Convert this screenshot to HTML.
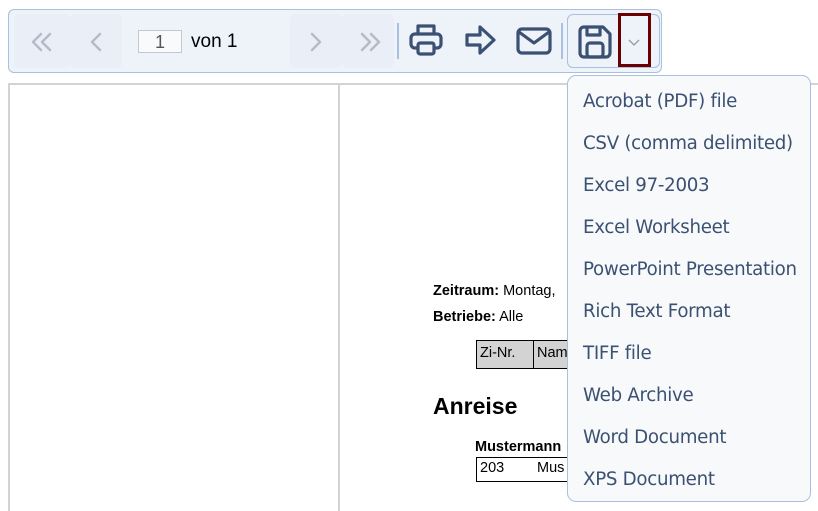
<!DOCTYPE html>
<html><head><meta charset="utf-8"><style>
body{margin:0;width:818px;height:511px;overflow:hidden;background:#fff;font-family:"Liberation Sans",sans-serif;position:relative}
.a{position:absolute}
.tb{left:8px;top:9px;width:654px;height:64px;background:#eef2f9;border:1px solid #a9c0e0;border-radius:6px;box-sizing:border-box}
.ic{position:absolute}
.dd{left:567px;top:75px;width:244px;height:427px;background:#f8f9fa;border:1.5px solid #a9c0e0;border-radius:9px;box-sizing:border-box}
.dd div{position:absolute;left:15px;font-size:18.5px;color:#3b5173;font-family:"DejaVu Sans","Liberation Sans",sans-serif;letter-spacing:-0.3px;transform:scaleX(0.985);transform-origin:left;white-space:nowrap}
.r{font-size:14.5px;color:#000;font-family:"Liberation Sans",sans-serif}
</style></head><body>
<div class="a tb"></div>
<div class="a" style="left:14px;top:14px;width:56px;height:54px;background:#eaeff7;border-radius:5px"></div>
<div class="a" style="left:70px;top:14px;width:52px;height:54px;background:#eaeff7;border-radius:5px"></div>
<div class="a" style="left:290px;top:14px;width:52px;height:54px;background:#eaeff7;border-radius:5px"></div>
<div class="a" style="left:342px;top:14px;width:52px;height:54px;background:#eaeff7;border-radius:5px"></div>
<svg class="ic" style="left:28px;top:31px" width="28" height="22" viewBox="0 0 28 22" fill="none" stroke="#b4bcc8" stroke-width="2.5" stroke-linecap="round" stroke-linejoin="round"><path d="M13 3 5 11l8 8M22 3l-8 8 8 8"/></svg>
<svg class="ic" style="left:88px;top:31px" width="16" height="22" viewBox="0 0 16 22" fill="none" stroke="#b4bcc8" stroke-width="2.5" stroke-linecap="round" stroke-linejoin="round"><path d="M12 3 4 11l8 8"/></svg>
<div class="a" style="left:138px;top:30px;width:44px;height:23px;border:1px solid #c4c8cc;background:#f9fafb;box-sizing:border-box;font-size:18px;color:#555;text-align:center;line-height:22px">1</div>
<div class="a" style="left:191px;top:31px;font-size:19px;color:#000">von&nbsp;1</div>
<svg class="ic" style="left:308px;top:31px" width="16" height="22" viewBox="0 0 16 22" fill="none" stroke="#b4bcc8" stroke-width="2.5" stroke-linecap="round" stroke-linejoin="round"><path d="M4 3l8 8-8 8"/></svg>
<svg class="ic" style="left:356px;top:31px" width="28" height="22" viewBox="0 0 28 22" fill="none" stroke="#b4bcc8" stroke-width="2.5" stroke-linecap="round" stroke-linejoin="round"><path d="M6 3l8 8-8 8M15 3l8 8-8 8"/></svg>
<div class="a" style="left:397px;top:23px;width:2px;height:36px;background:#a9c0e0"></div>
<svg class="ic" style="left:408px;top:22px" width="36" height="36" viewBox="0 0 36 36" fill="none" stroke="#3b5173" stroke-width="3.2" stroke-linejoin="round"><path d="M10 12V4h16v8"/><rect x="3" y="12" width="30" height="14" rx="4"/><rect x="10" y="21" width="16" height="11" rx="2" fill="#eef2f9"/></svg>
<svg class="ic" style="left:464px;top:24px" width="34" height="32" viewBox="0 0 34 32" fill="none" stroke="#3b5173" stroke-width="3.2" stroke-linejoin="round"><path d="M3 11h13V3l14 13-14 13v-8H3z"/></svg>
<svg class="ic" style="left:515px;top:26px" width="38" height="30" viewBox="0 0 38 30" fill="none" stroke="#3b5173" stroke-width="3.2" stroke-linejoin="round"><rect x="3" y="3" width="32" height="24" rx="4"/><path d="M4 6l15 11 15-11"/></svg>
<div class="a" style="left:561px;top:23px;width:2px;height:36px;background:#a9c0e0"></div>
<div class="a" style="left:567px;top:14px;width:93px;height:54px;border:1px solid #a9c0e0;border-radius:6px;box-sizing:border-box"></div>
<svg class="ic" style="left:577px;top:24px" width="36" height="36" viewBox="0 0 36 36" fill="none" stroke="#3b5173" stroke-width="3.2" stroke-linejoin="round"><path d="M3 7a4 4 0 0 1 4-4h19l7 7v19a4 4 0 0 1-4 4H7a4 4 0 0 1-4-4z"/><path d="M10 3v8h13V3"/><rect x="10" y="19" width="16" height="14" rx="3"/></svg>
<div class="a" style="left:618px;top:13px;width:33px;height:54px;border:3px solid #6b0000;box-sizing:border-box"></div>
<svg class="ic" style="left:627px;top:37px" width="14" height="10" viewBox="0 0 14 10" fill="none" stroke="#999" stroke-width="1.3"><path d="M2 3l5 5 5-5"/></svg>
<div class="a" style="left:8px;top:83px;width:810px;height:2px;background:#d3d3d3"></div>
<div class="a" style="left:8px;top:83px;width:2px;height:428px;background:#d3d3d3"></div>
<div class="a" style="left:338px;top:85px;width:2px;height:426px;background:#d3d3d3"></div>
<div class="a r" style="left:433px;top:283px"><b>Zeitraum:</b> Montag,</div>
<div class="a r" style="left:433px;top:309px"><b>Betriebe:</b> Alle</div>
<div class="a" style="left:476px;top:340px;width:100px;height:29px;background:#d3d3d3;border:1px solid #000;box-sizing:border-box"></div>
<div class="a" style="left:533px;top:340px;width:1px;height:29px;background:#000"></div>
<div class="a r" style="left:480px;top:345px">Zi-Nr.</div>
<div class="a r" style="left:537px;top:345px">Nam</div>
<div class="a" style="left:433px;top:393px;font-size:23px;font-weight:bold">Anreise</div>
<div class="a r" style="left:475px;top:439px;font-weight:bold">Mustermann</div>
<div class="a" style="left:476px;top:457px;width:100px;height:25px;border:1px solid #000;box-sizing:border-box"></div>
<div class="a r" style="left:480px;top:460px">203</div>
<div class="a r" style="left:537px;top:460px">Mus</div>
<div class="a dd">
<div style="top:15px">Acrobat (PDF) file</div>
<div style="top:57px">CSV (comma delimited)</div>
<div style="top:99px">Excel 97-2003</div>
<div style="top:141px">Excel Worksheet</div>
<div style="top:183px">PowerPoint Presentation</div>
<div style="top:225px">Rich Text Format</div>
<div style="top:267px">TIFF file</div>
<div style="top:309px">Web Archive</div>
<div style="top:351px">Word Document</div>
<div style="top:393px">XPS Document</div>
</div>
</body></html>
